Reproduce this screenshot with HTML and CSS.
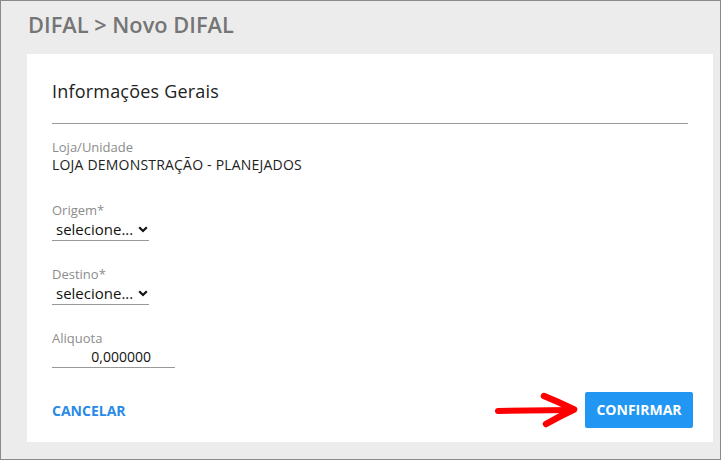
FILE: index.html
```html
<!DOCTYPE html>
<html lang="pt-BR">
<head>
<meta charset="utf-8">
<title>DIFAL &gt; Novo DIFAL</title>
<link rel="stylesheet" href="styles.css">
</head>
<body>
<div class="frame">
  <h1 class="page-title">DIFAL &gt; Novo DIFAL</h1>
  <section class="card">
    <h2 class="card-title">Informações Gerais</h2>
    <hr class="divider">
    <div class="field f-loja">
      <div class="label">Loja/Unidade</div>
      <div class="value">LOJA DEMONSTRAÇÃO - PLANEJADOS</div>
    </div>
    <div class="field f-origem">
      <div class="label">Origem*</div>
      <div class="select">
        <span>selecione...</span>
        <svg class="chev" width="10" height="7" viewBox="0 0 10 7"><path d="M1.2 1.3 L5 5 L8.8 1.3" fill="none" stroke="#111" stroke-width="2.2"/></svg>
      </div>
    </div>
    <div class="field f-destino">
      <div class="label">Destino*</div>
      <div class="select">
        <span>selecione...</span>
        <svg class="chev" width="10" height="7" viewBox="0 0 10 7"><path d="M1.2 1.3 L5 5 L8.8 1.3" fill="none" stroke="#111" stroke-width="2.2"/></svg>
      </div>
    </div>
    <div class="field f-aliquota">
      <div class="label">Aliquota</div>
      <div class="input">0,000000</div>
    </div>
    <div class="footer">
      <a class="btn-flat">CANCELAR</a>
      <a class="btn-raised">CONFIRMAR</a>
      <svg class="arrow" width="90" height="40" viewBox="0 0 90 40">
        <path d="M5 21 L78 20" fill="none" stroke="#f00" stroke-width="6" stroke-linecap="round"/>
        <path d="M51 6 Q66 12 81 19.5 Q67 26 53 34" fill="none" stroke="#f00" stroke-width="6.5" stroke-linecap="round" stroke-linejoin="round"/>
      </svg>
    </div>
  </section>
</div>
</body>
</html>
```

FILE: styles.css
```css
* { box-sizing: border-box; }
html, body { margin: 0; padding: 0; }
body {
  font-family: "Open Sans", "Liberation Sans", sans-serif;
  width: 721px;
  height: 460px;
  overflow: hidden;
}
.frame {
  width: 721px;
  height: 460px;
  border: 1px solid #8a8a8a;
  background: #ececec;
  padding: 0 7px 0 26px;
}
.page-title {
  margin: 0;
  height: 53px;
  padding-top: 9px;
  padding-left: 1px;
  font-size: 21.8px;
  line-height: 30px;
  font-weight: 600;
  color: #757575;
}
.card {
  background: #fff;
  width: 686px;
  height: 388px;
  padding: 25px 25px 0 25px;
  display: flex;
  flex-direction: column;
}
.card-title {
  margin: 0;
  font-size: 18px;
  line-height: 24px;
  font-weight: 500;
  letter-spacing: 0.2px;
  color: #222;
}
.divider {
  margin: 20px 0 0 0;
  border: 0;
  border-top: 1px solid #9a9a9a;
  height: 0;
}
.f-loja { margin-top: 14px; }
.f-origem { margin-top: 27px; }
.f-destino { margin-top: 24px; }
.f-aliquota { margin-top: 24px; }
.label {
  font-size: 13px;
  line-height: 18px;
  color: #8c8c8c;
}
.value {
  font-size: 14px;
  line-height: 18px;
  color: #222;
  font-weight: 500;
  letter-spacing: 0.2px;
}
.select {
  width: 97px;
  display: flex;
  align-items: center;
  gap: 5px;
  padding: 1px 0 2px 4px;
  font-size: 15px;
  line-height: 18px;
  color: #111;
  border-bottom: 1px solid #999;
}
.chev { margin-top: 1px; }
.input {
  width: 123px;
  text-align: right;
  padding: 1px 24px 1px 0;
  font-size: 14px;
  line-height: 18px;
  color: #111;
  border-bottom: 1px solid #999;
}
.footer {
  position: relative;
  margin-top: 24px;
  margin-right: -5px;
  display: flex;
  justify-content: space-between;
  align-items: center;
}
.btn-flat {
  font-size: 14px;
  font-weight: 700;
  color: #2a8ae8;
}
.btn-raised {
  background: #2196f3;
  color: #fff;
  font-size: 14px;
  font-weight: 700;
  height: 36px;
  line-height: 36px;
  border-radius: 2px;
  width: 108px;
  text-align: center;
}
.arrow {
  position: absolute;
  left: 441px;
  top: -2px;
}
```
